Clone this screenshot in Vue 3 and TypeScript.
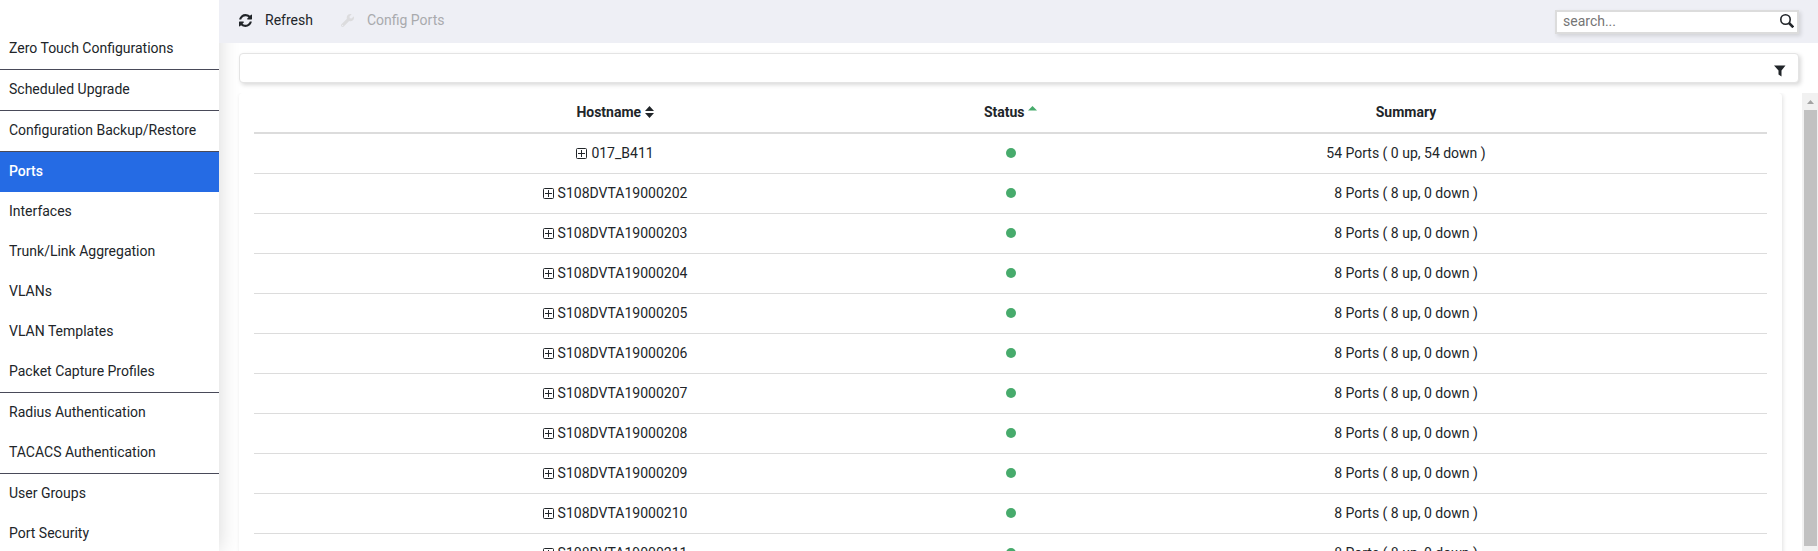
<script setup lang="ts">
import { ref, computed } from 'vue'

interface NavItem { label: string; divided?: boolean }
interface Device { name: string; total: number; up: number }

const nav: NavItem[] = [
  { label: 'Zero Touch Configurations', divided: true },
  { label: 'Scheduled Upgrade', divided: true },
  { label: 'Configuration Backup/Restore', divided: true },
  { label: 'Ports' },
  { label: 'Interfaces' },
  { label: 'Trunk/Link Aggregation' },
  { label: 'VLANs' },
  { label: 'VLAN Templates' },
  { label: 'Packet Capture Profiles', divided: true },
  { label: 'Radius Authentication' },
  { label: 'TACACS Authentication', divided: true },
  { label: 'User Groups' },
  { label: 'Port Security' },
]
const active = ref('Ports')
const query = ref('')

const devices: Device[] = [
  { name: '017_B411', total: 54, up: 0 },
  ...Array.from({ length: 10 }, (_, i) => ({ name: `S108DVTA19000${202 + i}`, total: 8, up: 8 })),
]
const shown = computed(() =>
  devices.filter((d) => d.name.toLowerCase().includes(query.value.toLowerCase())),
)
</script>

<template>
  <div class="app">
    <nav class="sidebar" aria-label="Configuration">
      <a
        v-for="item in nav"
        :key="item.label"
        href="#"
        class="nav-item"
        :class="{ divided: item.divided, active: item.label === active }"
        @click.prevent="active = item.label"
      >{{ item.label }}</a>
    </nav>

    <main class="main">
      <header class="toolbar">
        <button type="button" class="tool">
          <svg class="tool-icon" viewBox="0 0 1536 1536" aria-hidden="true">
            <path d="M1511 928q0 5-1 7-64 268-268 434.500T764 1536q-146 0-282.500-55T238 1324l-129 129q-19 19-45 19t-45-19-19-45V960q0-26 19-45t45-19h448q26 0 45 19t19 45-19 45l-137 137q71 66 161 102t187 36q134 0 250-65t186-179q11-17 53-117 8-23 30-23h192q13 0 22.500 9.500t9.500 22.500zm25-800v448q0 26-19 45t-45 19h-448q-26 0-45-19t-19-45 19-45l138-138Q969 256 768 256q-134 0-250 65T332 500q-11 17-53 117-8 23-30 23H50q-13 0-22.500-9.500T18 608v-7q65-268 270-434.500T768 0q146 0 284 55.500T1297 212l130-129q19-19 45-19t45 19 19 45z" />
          </svg>
          Refresh
        </button>
        <button type="button" class="tool" disabled>
          <svg class="tool-icon" viewBox="0 0 512 512" aria-hidden="true">
            <path d="M507.730 109.100c-2.240-9.030-13.540-12.090-20.120-5.510l-74.360 74.360-67.880-11.310-11.310-67.880 74.360-74.360c6.620-6.620 3.430-17.900-5.660-20.160-47.380-11.740-99.550.910-136.580 37.930-39.640 39.640-50.550 97.100-34.050 147.200L18.740 402.760c-24.990 24.990-24.990 65.510 0 90.500 24.990 24.990 65.510 24.990 90.500 0l213.210-213.210c50.120 16.710 107.470 5.680 147.370-34.220 37.070-37.070 49.700-89.320 37.910-136.730zM64 472c-13.250 0-24-10.750-24-24 0-13.260 10.750-24 24-24s24 10.740 24 24c0 13.250-10.750 24-24 24z" />
          </svg>
          Config Ports
        </button>
        <form class="search" role="search" @submit.prevent>
          <input v-model="query" type="text" placeholder="search..." aria-label="Search" />
          <button type="submit" aria-label="Search">
            <svg viewBox="0 0 14 14" aria-hidden="true">
              <circle cx="5.500" cy="5.500" r="4.700" fill="none" stroke="currentColor" stroke-width="1.600" />
              <path d="M9 9l4.300 4.300" stroke="currentColor" stroke-width="2.600" />
            </svg>
          </button>
        </form>
      </header>

      <section class="filter-bar">
        <button type="button" aria-label="Filter">
          <svg viewBox="0 0 12 12" aria-hidden="true"><path d="M0 0.500h11.500L7.500 5.500v6L4.500 9.500v-4z" /></svg>
        </button>
      </section>

      <div class="content">
        <section class="card">
          <table>
            <thead>
              <tr>
                <th scope="col">
                  Hostname
                  <svg class="sort" viewBox="0 0 9 12" aria-hidden="true"><path d="M4.500 0L9 5H0zM0 7h9l-4.500 5z" /></svg>
                </th>
                <th scope="col" class="status">
                  Status
                  <svg class="sort ascending" viewBox="0 0 9 12" aria-hidden="true"><path d="M4.500 0L9 4.500H0z" /></svg>
                </th>
                <th scope="col">Summary</th>
              </tr>
            </thead>
            <tbody>
              <tr v-for="d in shown" :key="d.name">
                <td>
                  <span class="host">
                    <button type="button" class="expand" :aria-label="`Expand ${d.name}`">
                      <svg viewBox="0 0 11 11" aria-hidden="true">
                        <rect x="0.500" y="0.500" width="10" height="10" rx="1" />
                        <path d="M5.500 2v7M2 5.500h7" />
                      </svg>
                    </button>
                    {{ d.name }}
                  </span>
                </td>
                <td><span class="dot" role="img" aria-label="Online"></span></td>
                <td>{{ d.total }} Ports ( {{ d.up }} up, {{ d.total - d.up }} down )</td>
              </tr>
            </tbody>
          </table>
        </section>
        <div class="scrollbar" aria-hidden="true">
          <svg viewBox="0 0 16 17"><path d="M5 11l3.500-4 3.500 4z" /></svg>
          <div class="thumb"></div>
        </div>
      </div>
    </main>
  </div>
</template>

<style>
body { background: #fff; }
</style>

<style scoped>
.app {
  display: flex;
  height: 100vh;
  overflow: hidden;
  font: 14px/20px Roboto, "Liberation Sans", sans-serif;
  color: #212529;
}
.app * { box-sizing: border-box; }
button { padding: 0; border: 0; background: none; font: inherit; color: inherit; }
svg { fill: currentColor; }

.sidebar {
  position: relative;
  flex: 0 0 219px;
  padding-top: 29px;
  background: #fff;
  box-shadow: 0 0 20px rgba(0, 0, 0, 0.16);
  overflow: hidden;
}
.nav-item {
  display: block;
  padding: 9px 9px 11px;
  color: #212529;
  text-decoration: none;
  white-space: nowrap;
}
.divided { border-bottom: 1px solid #494a59; }
.active { background: #256be4; color: #fff; font-weight: 500; }

.main { flex: 1; min-width: 0; display: flex; flex-direction: column; }
.toolbar {
  position: relative;
  display: flex;
  align-items: center;
  gap: 28px;
  flex: 0 0 43px;
  padding: 0 19px 0 20px;
  background: #eeeff5;
}
.tool { display: flex; align-items: center; gap: 13px; padding-bottom: 3px; }
.tool:disabled { color: #a9aaad; }
.tool:disabled .tool-icon { color: #dcdcde; }
.tool-icon { width: 13px; height: 13px; }
.search {
  display: flex;
  align-items: center;
  width: 244px;
  height: 24px;
  margin-left: auto;
  border: 2px solid #dcdcdc;
  background: #fff;
  box-shadow: 2px 2px 4px rgba(0, 0, 0, 0.12);
}
.search input { flex: 1; min-width: 0; height: 20px; padding: 0 6px 1px; border: 0; outline: 0; background: none; font: inherit; color: inherit; }
.search input::placeholder { color: #757575; }
.search button, .search svg { display: block; width: 14px; height: 14px; }
.search button { margin: 0 3px 1px 0; }

.filter-bar {
  display: flex;
  justify-content: flex-end;
  align-items: center;
  flex: 0 0 30px;
  margin: 10px 19px 10px 20px;
  padding: 5px 12px 0 0;
  border: 1px solid #e4e4e4;
  border-radius: 4px;
  background: #fff;
  box-shadow: 2px 2px 4px rgba(0, 0, 0, 0.15);
}
.filter-bar button, .filter-bar svg { display: block; width: 12px; height: 12px; }

.content { flex: 1; min-height: 0; display: flex; gap: 20px; padding-left: 20px; overflow: hidden; }
.card {
  flex: 1;
  align-self: flex-start;
  padding: 0 15px;
  border-radius: 4px;
  background: #fff;
  box-shadow: 1px 1px 4px rgba(0, 0, 0, 0.12);
}
table { width: 100%; table-layout: fixed; border-collapse: separate; border-spacing: 0; text-align: center; }
th { height: 41px; padding: 0 0 1px; border-bottom: 2px solid #dcdcdc; font-weight: 700; white-space: nowrap; }
th.status { width: 69px; }
td { height: 40px; padding: 0 0 1px; border-bottom: 1px solid #dcdcdc; white-space: nowrap; }
.sort { width: 9px; height: 12px; vertical-align: -1px; }
.ascending { color: #47ab6c; }
.host { display: inline-flex; align-items: center; gap: 4px; vertical-align: top; }
.expand, .expand svg { display: block; width: 11px; height: 11px; }
.expand svg { fill: none; stroke: currentColor; }
.dot { display: block; width: 10px; height: 10px; margin: 0 auto; border-radius: 50%; background: #47ab6c; }

.scrollbar { flex: 0 0 16px; display: flex; flex-direction: column; padding-bottom: 5px; background: #f1f1f1; }
.scrollbar svg { display: block; width: 16px; height: 17px; color: #a3a3a3; }
.thumb { flex: 1; margin: 0 1px 0 2px; background: #c1c1c1; }
</style>
